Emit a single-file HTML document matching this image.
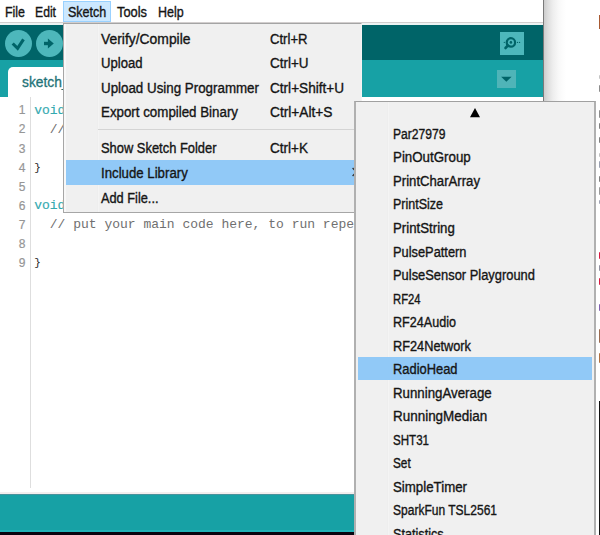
<!DOCTYPE html>
<html>
<head>
<meta charset="utf-8">
<style>
html,body{margin:0;padding:0;}
body{width:600px;height:535px;overflow:hidden;background:#fff;position:relative;font-family:"Liberation Sans",sans-serif;color:#111;}
.abs{position:absolute;}
.t{position:absolute;display:inline-block;-webkit-text-stroke:0.35px #151515;transform-origin:0 50%;font-size:14.0px;line-height:16px;white-space:nowrap;color:#151515;}
#win{left:0;top:0;width:543px;height:535px;background:#fff;overflow:hidden;}
#shadow{left:543px;top:0;width:24px;height:101px;background:linear-gradient(to right,#7a7a7a 0,#7a7a7a 1px,#cfcfcf 1.5px,#dedede 5px,#eeeeee 10px,#f9f9f9 16px,#fff 23px);}
#mbline{left:0;top:22px;width:544px;height:1px;background:#d2cece;}
#mbline2{left:0;top:23px;width:544px;height:2px;background:#ecf2f2;}
#mbsel{left:63px;top:1px;width:46px;height:19px;background:#cce8ff;border:1px solid #99d1ff;}
#toolbar{left:0;top:24.5px;width:544px;height:35.5px;background:#006468;}
#tabbar{left:0;top:60px;width:544px;height:37.4px;background:#17a1a5;}
.circ{position:absolute;width:27.4px;height:27.4px;border-radius:50%;background:#4db7bb;}
#tab{left:7.8px;top:67.2px;width:80px;height:31px;background:#fff;border-radius:5px 0 0 0;}
#tabtxt{left:21.6px;top:73.6px;font-size:14px;line-height:16px;color:#1f7377;white-space:nowrap;display:inline-block;transform-origin:0 50%;transform:scaleX(0.985);-webkit-text-stroke:0.3px #1f7377;}
#serial{left:500px;top:31.5px;width:23.7px;height:23.3px;background:#4db7bb;}
#dd{left:496.5px;top:69.5px;width:19.4px;height:18.5px;background:#4fb4b8;}
#gutterline{left:30px;top:97px;width:1px;height:391px;background:#dedede;}
.ln{position:absolute;left:5px;width:20.5px;text-align:right;font-size:12px;line-height:16px;color:#969696;-webkit-text-stroke:0.2px #969696;}
.code{position:absolute;left:34.2px;font-family:"Liberation Mono",monospace;font-size:13px;line-height:16px;color:#707070;white-space:pre;}
.kw{color:#33aab0;-webkit-text-stroke:0.15px #33aab0;}
.br{color:#1c1c1c;font-size:11px;}
#status{left:0;top:494px;width:544px;height:36.5px;background:linear-gradient(to bottom,#17a1a5 0,#17a1a5 34.5px,#20b2b7 35px,#20b2b7 100%);border-top:1px solid #4a929c;}
#preline{left:0;top:492px;width:544px;height:2px;background:#f3eeee;}
#black{left:0;top:531.5px;width:544px;height:4px;background:#0a0410;}
#menu{left:63px;top:23px;width:297px;height:188px;background:#f0f0f0;border:1px solid #a6a6a6;border-right-color:#f4f4f4;border-top-color:#a4a4a4;}
#sub{left:354px;top:101px;width:238px;height:440px;background:#f0f0f0;border:2px solid #b0b0b0;border-top:1px solid #a0a0a0;}
</style>
</head>
<body>
<div id="win" class="abs">
  <div id="mbsel" class="abs"></div>
<span class="t" id="mb0" style="left:5.0px;top:3.85px;transform:scaleX(0.8864)">File</span>
<span class="t" id="mb1" style="left:35.2px;top:3.85px;transform:scaleX(0.8705)">Edit</span>
<span class="t" id="mb2" style="left:67.7px;top:3.85px;transform:scaleX(0.8946)">Sketch</span>
<span class="t" id="mb3" style="left:116.7px;top:3.85px;transform:scaleX(0.9178)">Tools</span>
<span class="t" id="mb4" style="left:158.3px;top:3.85px;transform:scaleX(0.8925)">Help</span>
  <div id="mbline" class="abs"></div>
  <div id="mbline2" class="abs"></div>
  <div id="toolbar" class="abs"></div>
  <div id="tabbar" class="abs"></div>
  <div class="circ" style="left:4.8px;top:29.7px"></div>
  <div class="circ" style="left:35.9px;top:29.7px"></div>
  <svg class="abs" style="left:0;top:24px" width="70" height="40" viewBox="0 24 70 40">
    <path d="M12.7 43.5 L17.6 48.3 L23.5 39.4" fill="none" stroke="#006468" stroke-width="3.1"/>
    <path d="M44 43.5 H50" fill="none" stroke="#006468" stroke-width="3.4"/>
    <path d="M47.9 38.4 L53.8 43.5 L47.9 48.6 Z" fill="#006468"/>
  </svg>
  <div id="serial" class="abs"></div>
  <svg class="abs" style="left:500px;top:31px" width="24" height="24" viewBox="500 31 24 24">
    <circle cx="510.9" cy="42.4" r="4.2" fill="none" stroke="#006468" stroke-width="2.2"/>
    <circle cx="510.9" cy="42.4" r="1.3" fill="#006468"/>
    <path d="M508 45.4 L505.6 47.9" stroke="#006468" stroke-width="2.8" stroke-linecap="round"/>
    <circle cx="504.3" cy="42.4" r="0.6" fill="#006468"/>
    <circle cx="517.6" cy="42.4" r="0.6" fill="#006468"/>
    <circle cx="519.6" cy="42.4" r="0.6" fill="#006468"/>
  </svg>
  <div id="dd" class="abs"></div>
  <svg class="abs" style="left:496px;top:69px" width="20" height="20" viewBox="496 69 20 20">
    <path d="M501.1 76.7 H511.6 L506.35 81.7 Z" fill="#006468"/>
  </svg>
  <div id="tab" class="abs"></div>
  <span id="tabtxt" class="abs">sketch_</span>
  <div id="gutterline" class="abs"></div>
  <span class="ln" style="top:102.43px">1</span>
  <span class="ln" style="top:121.48px">2</span>
  <span class="ln" style="top:140.53px">3</span>
  <span class="ln" style="top:159.58px">4</span>
  <span class="ln" style="top:178.63px">5</span>
  <span class="ln" style="top:197.68px">6</span>
  <span class="ln" style="top:216.73px">7</span>
  <span class="ln" style="top:235.78px">8</span>
  <span class="ln" style="top:254.83px">9</span>
  <span class="code" style="top:102.93px"><span class="kw">void</span></span>
  <span class="code" style="top:121.98px">  // put</span>
  <span class="code" style="top:160.08px"><span class="br">}</span></span>
  <span class="code" style="top:198.18px"><span class="kw">void</span></span>
  <span class="code" style="top:217.23px">  // put your main code here, to run repeatedly:</span>
  <span class="code" style="top:255.33px"><span class="br">}</span></span>
  <div id="preline" class="abs"></div>
  <div id="status" class="abs"></div>
  <div id="black" class="abs"></div>
</div>
<div id="shadow" class="abs"></div>
<div class="abs" style="left:598.5px;top:15px;width:2px;height:14px;background:#a85a32"></div>
<div class="abs" style="left:598.7px;top:75px;width:2px;height:4px;background:#c4c4c4;border-radius:1px 0 0 1px"></div>
<div class="abs" style="left:598.7px;top:85px;width:2px;height:6.5px;background:#8c8c8c;border-radius:1px 0 0 1px"></div>
<div class="abs" style="left:598.7px;top:110px;width:2px;height:7.5px;background:#8c8c8c;border-radius:1px 0 0 1px"></div>
<div class="abs" style="left:598.7px;top:123px;width:2px;height:6px;background:#808080;border-radius:1px 0 0 1px"></div>
<div class="abs" style="left:598.7px;top:137px;width:2px;height:6px;background:#808080;border-radius:1px 0 0 1px"></div>
<div class="abs" style="left:598.7px;top:153px;width:2px;height:3.5px;background:#c0c0c0;border-radius:1px 0 0 1px"></div>
<div class="abs" style="left:598.7px;top:161px;width:2px;height:6.5px;background:#9aa0b0;border-radius:1px 0 0 1px"></div>
<div class="abs" style="left:598.7px;top:176px;width:2px;height:5.5px;background:#808080;border-radius:1px 0 0 1px"></div>
<div class="abs" style="left:598.7px;top:187px;width:2px;height:8px;background:#9a9a9a;border-radius:1px 0 0 1px"></div>
<div class="abs" style="left:598.7px;top:200px;width:2px;height:3.5px;background:#a0a4b4;border-radius:1px 0 0 1px"></div>
<div class="abs" style="left:598.7px;top:251.5px;width:2px;height:7.5px;background:#d81840;border-radius:1px 0 0 1px"></div>
<div class="abs" style="left:598.7px;top:265px;width:2px;height:6px;background:#9090a0;border-radius:1px 0 0 1px"></div>
<div class="abs" style="left:598.7px;top:277.5px;width:2px;height:7.0px;background:#d81840;border-radius:1px 0 0 1px"></div>
<div class="abs" style="left:598.7px;top:304px;width:2px;height:7px;background:#8060b0;border-radius:1px 0 0 1px"></div>
<div class="abs" style="left:598.7px;top:328.5px;width:2px;height:14.0px;background:#9a6a50;border-radius:1px 0 0 1px"></div>
<div class="abs" style="left:598.7px;top:353px;width:2px;height:10px;background:#b07040;border-radius:1px 0 0 1px"></div>
<div class="abs" style="left:598.7px;top:401px;width:2px;height:134px;background:#111"></div>

<div id="menu" class="abs">
  <div class="abs" style="left:0;top:0;width:1.5px;height:188px;background:#f8f8f8"></div>
  <div class="abs" style="left:32.5px;top:0;width:1px;height:188px;background:#eeeeee"></div>
  <div class="abs" style="left:33.5px;top:0;width:1px;height:188px;background:#f4f4f4"></div>
  <div class="abs" style="left:34px;top:105px;width:262px;height:1px;background:#d4d4d4"></div>
  <div class="abs" style="left:2px;top:136.2px;width:295px;height:24.4px;background:#91c9f7"></div>
</div>
<span class="t" id="mi0" style="left:101.3px;top:30.65px;transform:scaleX(0.9915)">Verify/Compile</span>
<span class="t" id="mi1" style="left:101.3px;top:54.90px;transform:scaleX(0.9352)">Upload</span>
<span class="t" id="mi2" style="left:101.3px;top:79.90px;transform:scaleX(0.9533)">Upload Using Programmer</span>
<span class="t" id="mi3" style="left:101.3px;top:104.40px;transform:scaleX(0.9517)">Export compiled Binary</span>
<span class="t" id="mi4" style="left:101.3px;top:140.15px;transform:scaleX(0.9218)">Show Sketch Folder</span>
<span class="t" id="mi5" style="left:101.3px;top:165.15px;transform:scaleX(0.9447)">Include Library</span>
<span class="t" id="mi6" style="left:101.3px;top:189.65px;transform:scaleX(0.9122)">Add File...</span>
<span class="t" id="sc0" style="left:269.5px;top:30.65px;transform:scaleX(0.9360)">Ctrl+R</span>
<span class="t" id="sc1" style="left:269.5px;top:54.90px;transform:scaleX(0.9610)">Ctrl+U</span>
<span class="t" id="sc2" style="left:269.5px;top:79.90px;transform:scaleX(0.9705)">Ctrl+Shift+U</span>
<span class="t" id="sc3" style="left:269.5px;top:104.40px;transform:scaleX(0.9794)">Ctrl+Alt+S</span>
<span class="t" id="sc4" style="left:269.5px;top:140.15px;transform:scaleX(0.9670)">Ctrl+K</span>
<svg class="abs" style="left:348px;top:164px" width="10" height="16" viewBox="348 164 10 16"><path d="M352.6 168 L356.4 172 L352.6 176" fill="none" stroke="#333" stroke-width="1.3"/></svg>

<div id="sub" class="abs">
  <div class="abs" style="left:31px;top:0;width:1px;height:440px;background:#eeeeee"></div>
  <div class="abs" style="left:32px;top:0;width:1px;height:440px;background:#f4f4f4"></div>
  <div class="abs" style="left:2px;top:254.9px;width:234px;height:23px;background:#91c9f7"></div>
</div>
<svg class="abs" style="left:468px;top:106px" width="14" height="13" viewBox="468 106 14 13"><path d="M470 117.3 H480 L475 108 Z" fill="#000"/></svg>
<span class="t" id="si0" style="left:393.0px;top:125.90px;transform:scaleX(0.8646)">Par27979</span>
<span class="t" id="si1" style="left:393.0px;top:149.42px;transform:scaleX(0.9514)">PinOutGroup</span>
<span class="t" id="si2" style="left:393.0px;top:172.94px;transform:scaleX(0.9396)">PrintCharArray</span>
<span class="t" id="si3" style="left:393.0px;top:196.46px;transform:scaleX(0.8924)">PrintSize</span>
<span class="t" id="si4" style="left:393.0px;top:219.98px;transform:scaleX(0.9455)">PrintString</span>
<span class="t" id="si5" style="left:393.0px;top:243.50px;transform:scaleX(0.9168)">PulsePattern</span>
<span class="t" id="si6" style="left:393.0px;top:267.02px;transform:scaleX(0.9208)">PulseSensor Playground</span>
<span class="t" id="si7" style="left:393.0px;top:290.54px;transform:scaleX(0.8062)">RF24</span>
<span class="t" id="si8" style="left:393.0px;top:314.06px;transform:scaleX(0.8994)">RF24Audio</span>
<span class="t" id="si9" style="left:393.0px;top:337.58px;transform:scaleX(0.9113)">RF24Network</span>
<span class="t" id="si10" style="left:393.0px;top:361.10px;transform:scaleX(0.9206)">RadioHead</span>
<span class="t" id="si11" style="left:393.0px;top:384.62px;transform:scaleX(0.9486)">RunningAverage</span>
<span class="t" id="si12" style="left:393.0px;top:408.14px;transform:scaleX(0.9605)">RunningMedian</span>
<span class="t" id="si13" style="left:393.0px;top:431.66px;transform:scaleX(0.8261)">SHT31</span>
<span class="t" id="si14" style="left:393.0px;top:455.18px;transform:scaleX(0.8422)">Set</span>
<span class="t" id="si15" style="left:393.0px;top:478.70px;transform:scaleX(0.9481)">SimpleTimer</span>
<span class="t" id="si16" style="left:393.0px;top:502.22px;transform:scaleX(0.8584)">SparkFun TSL2561</span>
<span class="t" id="si17" style="left:393.0px;top:525.74px;transform:scaleX(0.9051)">Statistics</span>
</body>
</html>
